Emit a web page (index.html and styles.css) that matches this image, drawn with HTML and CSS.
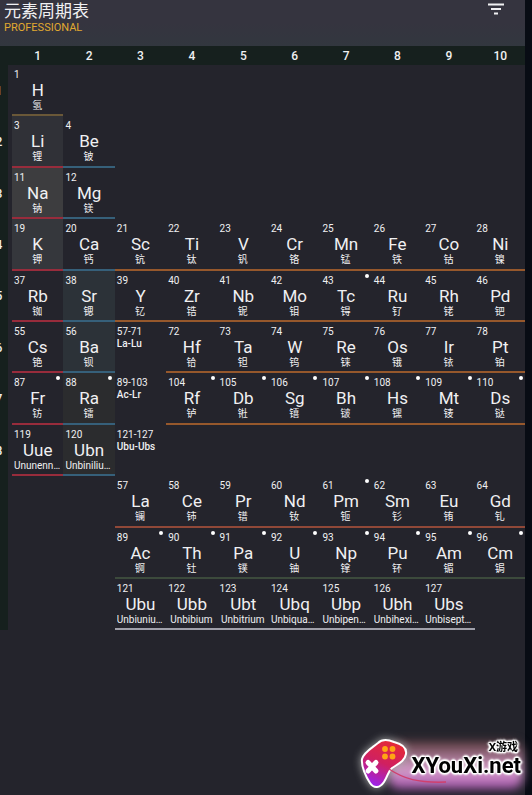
FILE: index.html
```html
<!DOCTYPE html>
<html lang="zh-CN">
<head>
  <meta charset="UTF-8" />
  <meta name="viewport" content="width=device-width, initial-scale=1.0"/>
  <title>元素周期表</title>
  <link rel="stylesheet" href="styles.css">
</head>
<body>

<div class="app">
  <header class="topbar">
    <div>
      <h1>元素周期表</h1>
      <p class="edition">PROFESSIONAL</p>
    </div>
    <button class="filter" aria-label="Filter">
      <svg viewBox="0 0 18 12" width="18" height="12">
        <path d="M1 1.5h16M4 6h10M7 10.5h4" stroke="#f0f0f2" stroke-width="2" fill="none"/>
      </svg>
    </button>
  </header>

  <main class="viewport">
    <table class="periodic">
      <thead>
        <tr id="groups"></tr>
      </thead>
      <tbody id="periods"></tbody>
    </table>
  </main>
</div>

<!-- Site badge -->
<div class="badge">
  <div class="glow"></div>
  <svg class="pad" viewBox="0 0 50 54" width="50" height="54">
    <defs>
      <linearGradient id="padFill" x1="0.7" y1="0" x2="0.3" y2="1">
        <stop offset="0" stop-color="#e52b35"/>
        <stop offset="0.5" stop-color="#d02060"/>
        <stop offset="1" stop-color="#9a22f0"/>
      </linearGradient>
    </defs>
    <path d="M18 6C22 2 29 3 34 5C42 7 47 10 46 17C45 24 38 27 32 31C28 34 28 39 24 45C20 51 14 52 10 46C6 40 1 29 2 22C4 15 12 11 18 6Z" fill="url(#padFill)" stroke="#fff" stroke-width="2"/>
    <g fill="#ffa514">
      <circle cx="25" cy="12" r="2.9"/>
      <circle cx="32.5" cy="12" r="2.9"/>
      <circle cx="25" cy="19.5" r="2.9"/>
      <circle cx="32.5" cy="19.5" r="2.9"/>
    </g>
    <path d="M8 25.500L16 34M16 25.500L8 34" stroke="#fff" stroke-width="5" stroke-linecap="round"/>
  </svg>
  <svg class="cable" viewBox="0 0 60 18" width="60" height="18">
    <path d="M1 2C16 12 30 16 58 15" stroke="#d0406e" stroke-width="1.5" fill="none"/>
  </svg>
  <div class="badge-text">
    <span class="badge-name">X游戏</span>
    <span class="badge-site">XYouXi.net</span>
  </div>
</div>

<script src="script.js"></script>
</body>
</html>
```
FILE: styles.css
```css
* {
  box-sizing: border-box;
}

body {
  margin: 0;
  padding-right: 7px;
  min-height: 100vh;
  background: #080c14;
  color: #f0f0f2;
  font-family: Roboto, "Noto Sans CJK SC", sans-serif;
  display: flex;
}

.app {
  flex: 1;
  min-width: 0;
  background: #24242c;
}

/* Top bar */
.topbar {
  display: flex;
  justify-content: space-between;
  align-items: flex-start;
  height: 46px;
  padding: 1px 20px 0 4px;
  background: linear-gradient(#35343f 50%, #32373f);
}

h1 {
  margin: 0;
  font-size: 17px;
  line-height: 20px;
  font-weight: 400;
}

.edition {
  margin: 0;
  font-size: 11px;
  line-height: 13px;
  color: #e0aa30;
}

.filter {
  display: flex;
  padding: 2px 0;
  border: none;
  background: none;
  cursor: pointer;
}

/* Table */
.viewport {
  overflow: hidden;
}

/* the period column is scrolled halfway out on the left */
.periodic {
  display: block;
  width: calc(100% + 11px);
  margin-left: -10px;
}

.periodic thead,
.periodic tbody {
  display: block;
}

.periodic tr {
  display: grid;
  grid-template-columns: 22px repeat(10, 1fr);
}

.periodic thead tr {
  height: 19px;
  background: #16201e;
}

.periodic th {
  padding: 0;
  font-size: 12px;
  line-height: 20px;
  font-weight: 500;
  text-align: center;
}

.periodic tbody th {
  display: flex;
  align-items: center;
  justify-content: center;
  margin-right: 4px;
  background: #16201e;
}

.periodic td {
  position: relative;
  aspect-ratio: 1;
  min-width: 0;
  padding: 4px 2px 0;
  overflow: hidden;
}

.number,
.symbol,
.name,
.range {
  display: block;
  color: #f0f0f2;
}

.number {
  font-size: 10px;
  line-height: 11px;
}

.symbol {
  font-size: 17px;
  line-height: 20px;
  text-align: center;
}

.name {
  margin-right: 1px;
  font-size: 10px;
  line-height: 11px;
  text-align: center;
  white-space: nowrap;
  overflow: hidden;
  text-overflow: ellipsis;
}

.range {
  font-size: 10px;
  line-height: 14px;
  font-weight: 500;
}

/* radioactive mark */
.dot {
  position: absolute;
  top: 3px;
  right: 3px;
  width: 4px;
  height: 4px;
  border-radius: 50%;
  background: #fff;
}

.element    { border-bottom: 2px solid; }
.hydrogen   { border-color: #6a5838; }
.alkali     { border-color: #982c3c; }
.alkaline   { border-color: #36607a; }
.transition { border-color: #96582c; }
.lanthanide { border-color: #904838; }
.actinide   { border-color: #3c4a3c; }
.super      { border-color: #a0a0aa; }

.tone-1 { background: #303137; }
.tone-2 { background: #3d3d3f; }
.tone-3 { background: #35373c; }
.tone-4 { background: #2c3238; }
.tone-5 { background: #2b2c2e; }

/* Site badge */
.badge {
  position: fixed;
  right: 9px;
  bottom: 4px;
  display: flex;
  align-items: flex-start;
  color: #000;
  font-family: "Noto Sans", "Noto Sans CJK SC", sans-serif;
}

.glow {
  position: absolute;
  top: 4px;
  right: 0;
  bottom: 2px;
  left: 28px;
  border-radius: 12px;
  background: linear-gradient(#5a3a3c, #d8a0cc 60%, #a050a8);
  filter: blur(5px);
}

.pad {
  position: relative;
  filter: drop-shadow(0 0 4px #aaa);
}

.cable {
  position: absolute;
  top: 30px;
  left: 28px;
}

.badge-text {
  position: relative;
  display: flex;
  flex-direction: column;
  padding: 3px 2px 0;
  font-weight: 700;
  text-shadow: 1px 1px 1px #fff, -1px -1px 1px #fff, 1px -1px 1px #fff, -1px 1px 1px #fff, 2px 0 2px #fff, -2px 0 2px #fff, 0 2px 2px #fff, 0 -2px 2px #fff;
}

.badge-name {
  align-self: flex-end;
  padding-right: 3px;
  font-size: 11px;
  line-height: 14px;
}

.badge-site {
  font-family: Roboto, sans-serif;
  font-size: 22px;
  line-height: 24px;
}
```
FILE: script.js
```js
// [number, symbol, name, group, category, radioactive, tone]
const periods = [
  [[1, 'H', '氢', 1, 'hydrogen']],
  [[3, 'Li', '锂', 1, 'alkali', 0, 1], [4, 'Be', '铍', 2, 'alkaline']],
  [[11, 'Na', '钠', 1, 'alkali', 0, 2], [12, 'Mg', '镁', 2, 'alkaline']],
  [
    [19, 'K', '钾', 1, 'alkali', 0, 3], [20, 'Ca', '钙', 2, 'alkaline'],
    [21, 'Sc', '钪', 3, 'transition'], [22, 'Ti', '钛', 4, 'transition'],
    [23, 'V', '钒', 5, 'transition'], [24, 'Cr', '铬', 6, 'transition'],
    [25, 'Mn', '锰', 7, 'transition'], [26, 'Fe', '铁', 8, 'transition'],
    [27, 'Co', '钴', 9, 'transition'], [28, 'Ni', '镍', 10, 'transition']
  ],
  [
    [37, 'Rb', '铷', 1, 'alkali'], [38, 'Sr', '锶', 2, 'alkaline', 0, 4],
    [39, 'Y', '钇', 3, 'transition'], [40, 'Zr', '锆', 4, 'transition'],
    [41, 'Nb', '铌', 5, 'transition'], [42, 'Mo', '钼', 6, 'transition'],
    [43, 'Tc', '锝', 7, 'transition', 1], [44, 'Ru', '钌', 8, 'transition'],
    [45, 'Rh', '铑', 9, 'transition'], [46, 'Pd', '钯', 10, 'transition']
  ],
  [
    [55, 'Cs', '铯', 1, 'alkali'], [56, 'Ba', '钡', 2, 'alkaline', 0, 4],
    ['57-71', 'La-Lu', '', 3, 'range-cell'], [72, 'Hf', '铪', 4, 'transition'],
    [73, 'Ta', '钽', 5, 'transition'], [74, 'W', '钨', 6, 'transition'],
    [75, 'Re', '铼', 7, 'transition'], [76, 'Os', '锇', 8, 'transition'],
    [77, 'Ir', '铱', 9, 'transition'], [78, 'Pt', '铂', 10, 'transition']
  ],
  [
    [87, 'Fr', '钫', 1, 'alkali', 1], [88, 'Ra', '镭', 2, 'alkaline', 1, 5],
    ['89-103', 'Ac-Lr', '', 3, 'range-cell'], [104, 'Rf', '𬬻', 4, 'transition', 1],
    [105, 'Db', '𬭊', 5, 'transition', 1], [106, 'Sg', '𬭳', 6, 'transition', 1],
    [107, 'Bh', '𬭛', 7, 'transition', 1], [108, 'Hs', '𬭶', 8, 'transition', 1],
    [109, 'Mt', '鿏', 9, 'transition', 1], [110, 'Ds', '𫟼', 10, 'transition', 1]
  ],
  [
    [119, 'Uue', 'Ununennium', 1, 'alkali'], [120, 'Ubn', 'Unbinilium', 2, 'alkaline', 0, 5],
    ['121-127', 'Ubu-Ubs', '', 3, 'range-cell']
  ],
  [
    [57, 'La', '镧', 3, 'lanthanide'], [58, 'Ce', '铈', 4, 'lanthanide'],
    [59, 'Pr', '镨', 5, 'lanthanide'], [60, 'Nd', '钕', 6, 'lanthanide'],
    [61, 'Pm', '钷', 7, 'lanthanide', 1], [62, 'Sm', '钐', 8, 'lanthanide'],
    [63, 'Eu', '铕', 9, 'lanthanide'], [64, 'Gd', '钆', 10, 'lanthanide']
  ],
  [
    [89, 'Ac', '锕', 3, 'actinide', 1], [90, 'Th', '钍', 4, 'actinide', 1],
    [91, 'Pa', '镤', 5, 'actinide', 1], [92, 'U', '铀', 6, 'actinide', 1],
    [93, 'Np', '镎', 7, 'actinide', 1], [94, 'Pu', '钚', 8, 'actinide', 1],
    [95, 'Am', '镅', 9, 'actinide', 1], [96, 'Cm', '锔', 10, 'actinide', 1]
  ],
  [
    [121, 'Ubu', 'Unbiunium', 3, 'super'], [122, 'Ubb', 'Unbibium', 4, 'super'],
    [123, 'Ubt', 'Unbitrium', 5, 'super'], [124, 'Ubq', 'Unbiquadium', 6, 'super'],
    [125, 'Ubp', 'Unbipentium', 7, 'super'], [126, 'Ubh', 'Unbihexium', 8, 'super'],
    [127, 'Ubs', 'Unbiseptium', 9, 'super']
  ]
];

function renderCell(cell) {
  if (!cell) return '<td></td>';
  const [number, symbol, name, , category, radioactive, tone] = cell;
  if (category === 'range-cell') {
    return `<td><span class="number">${number}</span><span class="range">${symbol}</span></td>`;
  }
  return `<td class="element ${category}${tone ? ' tone-' + tone : ''}">
    <span class="number">${number}</span>
    <span class="symbol">${symbol}</span>
    <span class="name">${name}</span>
    ${radioactive ? '<span class="dot"></span>' : ''}
  </td>`;
}

function renderTable() {
  let head = '<th></th>';
  for (let g = 1; g <= 10; g++) head += `<th scope="col">${g}</th>`;
  document.getElementById('groups').innerHTML = head;

  document.getElementById('periods').innerHTML = periods.map((row, i) => {
    let html = `<tr><th scope="row">${i < 8 ? i + 1 : ''}</th>`;
    for (let g = 1; g <= 10; g++) html += renderCell(row.find(c => c[3] === g));
    return html + '</tr>';
  }).join('');
}

renderTable();
```
